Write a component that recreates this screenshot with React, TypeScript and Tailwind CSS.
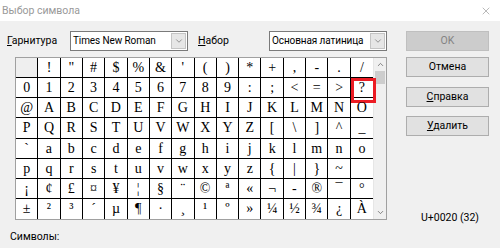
import { ChevronDown, ChevronUp, X } from 'lucide-react';

const rows: string[][] = [
  [' ', '!', '"', '#', '$', '%', '&', "'", '(', ')', '*', '+', ',', '-', '.', '/'],
  ['0', '1', '2', '3', '4', '5', '6', '7', '8', '9', ':', ';', '<', '=', '>', '?'],
  ['@', 'A', 'B', 'C', 'D', 'E', 'F', 'G', 'H', 'I', 'J', 'K', 'L', 'M', 'N', 'O'],
  ['P', 'Q', 'R', 'S', 'T', 'U', 'V', 'W', 'X', 'Y', 'Z', '[', '\\', ']', '^', '_'],
  ['`', 'a', 'b', 'c', 'd', 'e', 'f', 'g', 'h', 'i', 'j', 'k', 'l', 'm', 'n', 'o'],
  ['p', 'q', 'r', 's', 't', 'u', 'v', 'w', 'x', 'y', 'z', '{', '|', '}', '~', ''],
  ['¡', '¢', '£', '¤', '¥', '¦', '§', '¨', '©', 'ª', '«', '¬', '-', '®', '¯', '°'],
  ['±', '²', '³', '´', 'µ', '¶', '·', '¸', '¹', 'º', '»', '¼', '½', '¾', '¿', 'À'],
];

const Select = ({ value }: { value: string }) => (
  <div className="flex h-[20px] w-[118px] items-center border border-[#7a7a7a] bg-white">
    <span className="flex-1 whitespace-nowrap pl-[2px] text-[10px] leading-none tracking-[-0.1px] text-black">{value}</span>
    <div className="mr-px flex h-[16px] w-[15px] shrink-0 items-center justify-center border border-[#c4c4c4] bg-[#e6e6e6]">
      <ChevronDown className="h-[10px] w-[10px] text-[#606060]" strokeWidth={1.5} />
    </div>
  </div>
);

const Button = ({ children, disabled }: { children: React.ReactNode; disabled?: boolean }) => (
  <div
    className={
      disabled
        ? 'flex h-[20px] w-[83px] items-center justify-center border border-[#bfbfbf] bg-[#cccccc] text-[10.5px] text-[#838383]'
        : 'flex h-[20px] w-[83px] items-center justify-center border border-[#adadad] bg-[#e1e1e1] text-[10.5px] text-black'
    }
  >
    {children}
  </div>
);

export default function App() {
  return (
    <div className="flex h-[248px] w-[500px] flex-col overflow-hidden bg-[#f0f0f0] font-['Roboto',sans-serif] text-black">
      {/* Title bar */}
      <div className="flex h-[21px] items-center justify-between bg-white pl-[2px] pr-[8px]">
        <span className="text-[10.5px] text-[#999999]">Выбор символа</span>
        <X className="h-[12px] w-[12px] text-[#8a8a8a]" strokeWidth={1.2} />
      </div>

      <div className="flex pt-[10px]">
        {/* Left side */}
        <div className="flex w-[387px] flex-col pl-[7px]">
          <div className="flex h-[20px] items-center">
            <span className="w-[63px] text-[10.5px]"><u>Г</u>арнитура</span>
            <Select value="Times New Roman" />
            <span className="ml-[10px] w-[71px] text-[10.5px]"><u>Н</u>абор</span>
            <Select value="Основная латиница" />
          </div>

          <div className="ml-[8px] mt-[6px] flex h-[163px] border border-[#a0a0a0] bg-white">
            <div className="grid w-[359px] grid-cols-16 grid-rows-8 font-['Liberation_Serif',serif] text-[14px]">
              {rows.map((row, r) =>
                row.map((ch, c) => (
                  <div
                    key={`${r}-${c}`}
                    className={
                      'relative flex items-center justify-center border-black ' +
                      (c < 15 ? 'border-r ' : '') +
                      (r < 7 ? 'border-b ' : '') +
                      (r === 0 && c === 0 ? 'bg-[#efefef]' : '')
                    }
                  >
                    {ch}
                    {r === 1 && c === 15 && (
                      <div className="absolute left-0 top-0 h-[25px] w-[25px] border-[3px] border-[#ec1c24]" />
                    )}
                  </div>
                ))
              )}
            </div>
            {/* Scrollbar */}
            <div className="flex w-[13px] flex-col border-l border-[#e6e6e6] bg-[#f0f0f0]">
              <div className="flex h-[13px] items-center justify-center">
                <ChevronUp className="h-[9px] w-[9px] text-[#606060]" strokeWidth={2} />
              </div>
              <div className="mx-px h-[13px] bg-[#cdcdcd]" />
              <div className="flex-1" />
              <div className="flex h-[13px] items-center justify-center">
                <ChevronDown className="h-[9px] w-[9px] text-[#606060]" strokeWidth={2} />
              </div>
            </div>
          </div>

          <div className="ml-[3px] mt-[9px] text-[10.5px]">Символы:</div>
        </div>

        {/* Right side */}
        <div className="ml-[19px] flex flex-col">
          <Button disabled>OK</Button>
          <div className="mt-[6px]">
            <Button>Отмена</Button>
          </div>
          <div className="mt-[10px]">
            <Button><span><u>С</u>правка</span></Button>
          </div>
          <div className="mt-[9px]">
            <Button><span><u>У</u>далить</span></Button>
          </div>
          <div className="mt-[74px] pl-[15px] text-[10.5px]">U+0020 (32)</div>
        </div>
      </div>
    </div>
  );
}
